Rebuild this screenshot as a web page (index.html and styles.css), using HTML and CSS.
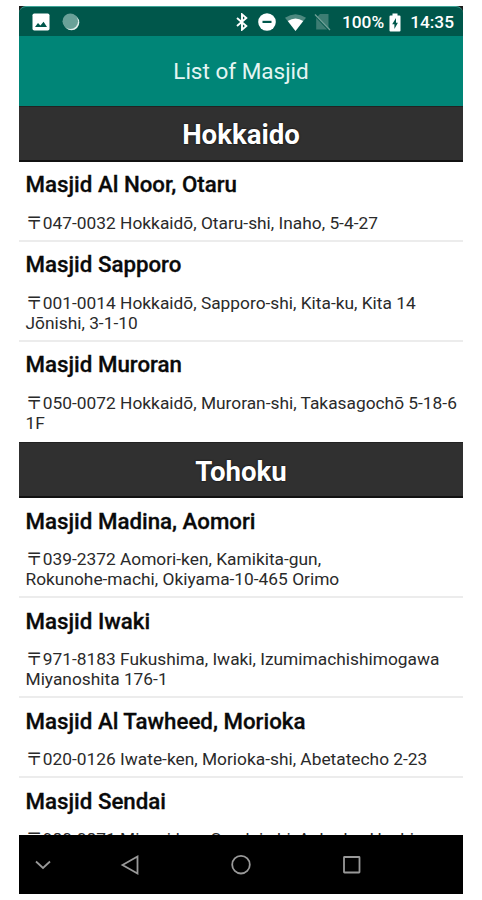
FILE: index.html
```html
<!DOCTYPE html>
<html lang="en">
<head>
    <meta charset="UTF-8">
    <meta name="viewport" content="width=device-width, initial-scale=1.0">
    <title>List of Masjid</title>
    <link rel="stylesheet" href="styles.css">
</head>
<body>
    <div class="phone">
        <div class="status-bar">
            <svg class="icon-photo" width="18" height="18" viewBox="0 0 18 18">
                <rect x="0.5" y="0.5" width="17" height="17" rx="1.8" fill="#fff"/>
                <path d="M3 14 L6 10 L8.4 12.4 L11.6 8.8 L15 14 Z" fill="#00574b"/>
            </svg>
            <svg class="icon-sync" width="18" height="18" viewBox="0 0 18 18">
                <circle cx="9.5" cy="9.5" r="7.8" fill="#e0eeeb"/>
                <circle cx="8.3" cy="8.3" r="7.8" fill="#69a198"/>
            </svg>
            <div class="status-right">
                <svg class="icon-bluetooth" width="12" height="18" viewBox="0 0 12 18">
                    <path d="M1 5 L10.3 13 L6 16.7 V1.3 L10.3 5 L1 13" fill="none" stroke="#fff" stroke-width="1.9"/>
                </svg>
                <svg class="icon-dnd" width="18" height="18" viewBox="0 0 18 18">
                    <circle cx="9" cy="9" r="8.8" fill="#fff"/>
                    <rect x="4.5" y="7.8" width="9" height="2.2" fill="#00574b"/>
                </svg>
                <svg class="icon-wifi" width="21" height="17" viewBox="0 0 21 17">
                    <path d="M0 3.8 Q10.5 -3.4 21 3.8 L10.5 17 Z" fill="#4d8980"/>
                    <path d="M2.8 7 Q10.5 1.8 18.2 7 L10.5 17 Z" fill="#fff"/>
                </svg>
                <svg class="icon-nosim" width="17" height="18" viewBox="0 0 17 18">
                    <path d="M6 1 H14.5 V15 L3.5 3.5 Z M2.2 5 L13.2 16.5 H2.2 Z" fill="#3d7d73"/>
                    <path d="M1 1.5 L16 17" stroke="#70a198" stroke-width="1.3"/>
                </svg>
                <span class="battery-level">100%</span>
                <svg class="icon-battery" width="12" height="19" viewBox="0 0 12 19">
                    <path d="M3.5 0.5 H8.5 V2.5 H10.5 Q11.5 2.5 11.5 3.5 V17.5 Q11.5 18.5 10.5 18.5 H1.5 Q0.5 18.5 0.5 17.5 V3.5 Q0.5 2.5 1.5 2.5 H3.5 Z" fill="#fff"/>
                    <path d="M7 5 L3.2 11.2 H5.4 V16 L8.9 9.8 H7 Z" fill="#00574b"/>
                </svg>
                <span class="clock">14:35</span>
            </div>
        </div>

        <div class="toolbar">
            <h1 class="title">List of Masjid</h1>
        </div>

        <div class="list">
            <h2 class="region">Hokkaido</h2>
            <div class="masjid">
                <h3>Masjid Al Noor, Otaru</h3>
                <p>〒047-0032 Hokkaidō, Otaru-shi, Inaho, 5-4-27</p>
            </div>
            <div class="masjid">
                <h3>Masjid Sapporo</h3>
                <p>〒001-0014 Hokkaidō, Sapporo-shi, Kita-ku, Kita 14<br>Jōnishi, 3-1-10</p>
            </div>
            <div class="masjid">
                <h3>Masjid Muroran</h3>
                <p>〒050-0072 Hokkaidō, Muroran-shi, Takasagochō 5-18-6<br>1F</p>
            </div>

            <h2 class="region">Tohoku</h2>
            <div class="masjid">
                <h3>Masjid Madina, Aomori</h3>
                <p>〒039-2372 Aomori-ken, Kamikita-gun,<br>Rokunohe-machi, Okiyama-10-465 Orimo</p>
            </div>
            <div class="masjid">
                <h3>Masjid Iwaki</h3>
                <p>〒971-8183 Fukushima, Iwaki, Izumimachishimogawa<br>Miyanoshita 176-1</p>
            </div>
            <div class="masjid">
                <h3>Masjid Al Tawheed, Morioka</h3>
                <p>〒020-0126 Iwate-ken, Morioka-shi, Abetatecho 2-23</p>
            </div>
            <div class="masjid">
                <h3>Masjid Sendai</h3>
                <p>〒980-0871 Miyagi-ken, Sendai-shi, Aoba-ku, Hachiman</p>
            </div>
        </div>

        <div class="nav-bar">
            <svg width="444" height="59" viewBox="0 0 444 59" fill="none" stroke="#999" stroke-width="1.8">
                <path d="M17 26.5 L24 33 L31 26.5"/>
                <path d="M103.5 30 L118.5 21.5 V38.5 Z"/>
                <circle cx="222" cy="29.7" r="8.8"/>
                <rect x="325" y="22" width="15.5" height="15.5" rx="0.5"/>
            </svg>
        </div>
    </div>
</body>
</html>
```
FILE: styles.css
```css
body {
    font-family: Roboto, "Noto Sans CJK JP", sans-serif;
    margin: 0;
    padding: 6px 19px 0;
    background-color: white;
}

h1, h2, h3, p {
    margin: 0;
}

.phone {
    width: 444px;
    height: 888px;
    display: flex;
    flex-direction: column;
    background-color: #1c1c1c;
}

.status-bar {
    height: 30px;
    flex-shrink: 0;
    box-sizing: border-box;
    display: flex;
    align-items: center;
    padding: 1px 9px 0 13px;
    border-top: 1px solid #3fa598;
    border-radius: 7px 7px 0 0;
    background-color: #00574b;
    color: white;
    font-size: 17.3px;
    font-weight: 500;
}

.icon-sync {
    margin-left: 12px;
}

.status-right {
    display: flex;
    align-items: center;
    margin-left: auto;
}

.icon-dnd {
    margin-left: 10px;
}

.icon-wifi {
    margin-left: 9px;
}

.icon-nosim {
    margin-left: 8px;
}

.battery-level {
    margin-left: 11px;
}

.icon-battery {
    margin: 0 9px 0 5px;
}

.toolbar {
    height: 69.5px;
    flex-shrink: 0;
    display: flex;
    align-items: center;
    justify-content: center;
    background-color: #008577;
}

.title {
    color: #e5f5f3;
    font-size: 22.5px;
    font-weight: 400;
}

.list {
    flex: 1;
    overflow: hidden;
    background-color: white;
}

.region {
    height: 56px;
    box-sizing: border-box;
    border-top: 1px solid #222;
    border-bottom: 2px solid #111;
    background-color: #303030;
    color: white;
    font-size: 27.6px;
    font-weight: 700;
    line-height: 56px;
    text-align: center;
    text-shadow: 0 0 2px black;
}

.masjid + .region {
    height: 56.5px;
    line-height: 57px;
}

.masjid {
    padding: 7.5px 6px 7px 6.5px;
    border-bottom: 2px solid #ececec;
    white-space: nowrap;
}

.masjid:has(+ .region) {
    border-bottom-color: white;
}

.masjid h3 {
    color: #0a0a0a;
    font-size: 22.3px;
    font-weight: 500;
    line-height: 30px;
    -webkit-text-stroke: 0.3px #0a0a0a;
}

.masjid p {
    margin-top: 13.5px;
    color: #2a2a2a;
    font-size: 17.33px;
    line-height: 20px;
}

.nav-bar {
    height: 59px;
    flex-shrink: 0;
    background-color: black;
}
```
